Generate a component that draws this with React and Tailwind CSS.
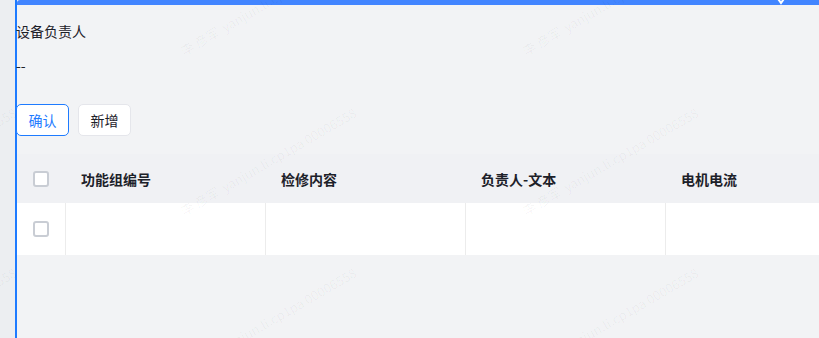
import React from 'react';

const columns = ['功能组编号', '检修内容', '负责人-文本', '电机电流'];

const marks = [];
[-155, 185, 527, 867].forEach((x) => {
    [57, 217, 377].forEach((y) => marks.push({ x, y }));
});

const Checkbox = () => (
    <span className="block w-4 h-4 rounded-[3px] border-2 border-[#c9cdd4] bg-white" />
);

const App = () => {
    return (
        <div className="relative flex w-[819px] h-[338px] overflow-hidden bg-[#eceef1] font-[Noto_Sans_CJK_SC,sans-serif] text-[#1d2129]">
            <div className="w-[15px] shrink-0" />
            <div className="flex-1 flex flex-col border-l-2 border-[#1e7bff] bg-[#f2f3f5]">
                <div className="h-[5px] shrink-0 bg-[#4285ff] rounded-tl-[3px]" />

                <div className="-ml-[1px] pt-[16px] text-sm leading-5">设备负责人</div>
                <div className="-ml-[1px] pt-[14px] text-sm leading-5">--</div>

                <div className="flex gap-[9px] mt-[29px] -ml-[1px]">
                    <button className="h-[32px] w-[53px] rounded-[5px] border border-[#1e7bff] bg-white text-sm text-[#1e7bff]">
                        确认
                    </button>
                    <button className="h-[32px] w-[53px] rounded-[5px] border border-[#e5e6eb] bg-white text-sm text-[#1d2129]">
                        新增
                    </button>
                </div>

                <div className="mt-[18px]">
                    <div className="flex h-[49px] items-center bg-[#f0f1f4]">
                        <div className="w-[48px] flex justify-center shrink-0">
                            <Checkbox />
                        </div>
                        {columns.map((c) => (
                            <div key={c} className="w-[200px] shrink-0 px-4 text-sm font-bold">
                                {c}
                            </div>
                        ))}
                    </div>
                    <div className="flex h-[52px] bg-white">
                        <div className="w-[48px] flex items-center justify-center shrink-0">
                            <Checkbox />
                        </div>
                        {columns.map((c) => (
                            <div key={c} className="w-[200px] shrink-0 border-l border-[#ececec]" />
                        ))}
                    </div>
                </div>
            </div>

            {/* cut off icon at top right */}
            <svg className="absolute left-[774px] top-[-6px]" width="14" height="12" viewBox="0 0 14 12">
                <path d="M2 2 L7 9 L12 2" fill="none" stroke="white" strokeWidth="2" />
            </svg>

            {/* watermark */}
            {marks.map((m, i) => (
                <div
                    key={i}
                    className="absolute pointer-events-none whitespace-nowrap text-[13px] leading-none text-black/[0.04] origin-bottom-left -rotate-30"
                    style={{ left: m.x, top: m.y - 13 }}
                >
                    李 彦军/yanjun.li.cp1pa 00006558
                </div>
            ))}
        </div>
    );
};

export default App;
